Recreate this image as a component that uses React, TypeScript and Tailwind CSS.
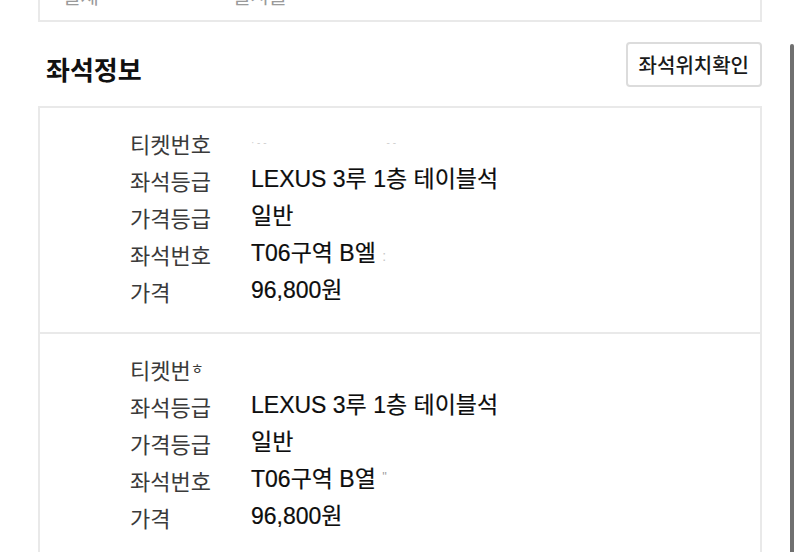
const font = { fontFamily: '"Noto Sans CJK KR", "Noto Sans", sans-serif' };
const valueFont = { fontFamily: '"Liberation Sans", "Noto Sans CJK KR", sans-serif' };

type Row = { label: React.ReactNode; value: React.ReactNode };

function TicketBlock({ rows, last }: { rows: Row[]; last?: boolean }) {
  return (
    <div className={`pt-[16px] pb-[23px] pl-[90px] ${last ? "" : "border-b-2 border-[#e9e9e9]"}`}>
      {rows.map((r, i) => (
        <div key={i} className="flex h-[37px] items-center leading-none">
          <span className="w-[121px] shrink-0 text-[22px] text-[#3a3a3a]">{r.label}</span>
          <span
            className="text-[23px] font-normal text-[#0d0d0d] [-webkit-text-stroke:0.2px_#0d0d0d]"
            style={valueFont}
          >
            {r.value}
          </span>
        </div>
      ))}
    </div>
  );
}

export default function App() {
  const first: Row[] = [
    {
      label: "티켓번호",
      value: (
        <span className="flex items-center gap-[120px] text-[10px] text-[#cfcfcf] [-webkit-text-stroke:0]">
          <span>· - -</span>
          <span>- -</span>
        </span>
      ),
    },
    { label: "좌석등급", value: "LEXUS 3루 1층 테이블석" },
    { label: "가격등급", value: "일반" },
    {
      label: "좌석번호",
      value: (
        <>
          T06구역 B엘 <span className="text-[14px] text-[#c8c8c8] [-webkit-text-stroke:0]">:</span>
        </>
      ),
    },
    { label: "가격", value: "96,800원" },
  ];
  const second: Row[] = [
    {
      label: (
        <>
          티켓번<span className="relative top-[-5px] text-[14px]">ㅎ</span>
        </>
      ),
      value: "",
    },
    { label: "좌석등급", value: "LEXUS 3루 1층 테이블석" },
    { label: "가격등급", value: "일반" },
    {
      label: "좌석번호",
      value: (
        <>
          T06구역 B열{" "}
          <span className="relative top-[-6px] text-[12px] text-[#9a9a9a] [-webkit-text-stroke:0]">''</span>
        </>
      ),
    },
    { label: "가격", value: "96,800원" },
  ];

  return (
    <div className="relative h-[552px] w-[800px] overflow-hidden bg-white" style={font}>
      <div className="mx-[38px] -mt-[20px] h-[42px] border-x-2 border-b-2 border-[#e9e9e9]">
        <div className="flex pt-[6px] text-[20px] leading-none text-[#9a9a9a]">
          <span className="ml-[22px] w-[170px]">결제</span>
          <span>일시불</span>
        </div>
      </div>

      <div className="mx-[38px] mt-[20px] flex items-start justify-between">
        <h2 className="mt-[14px] ml-[8px] text-[26px] font-bold leading-none text-[#111]">좌석정보</h2>
        <button className="h-[45px] rounded-[4px] border-2 border-[#dcdcdc] bg-white px-[11px] text-[20px] font-medium text-[#1a1a1a]">
          좌석위치확인
        </button>
      </div>

      <div className="mx-[38px] mt-[19px] border-2 border-[#e9e9e9]">
        <TicketBlock rows={first} />
        <TicketBlock rows={second} last />
      </div>

      <div className="absolute right-[6px] top-[44px] h-[520px] w-[4px] rounded-full bg-[#707070]" />
    </div>
  );
}
